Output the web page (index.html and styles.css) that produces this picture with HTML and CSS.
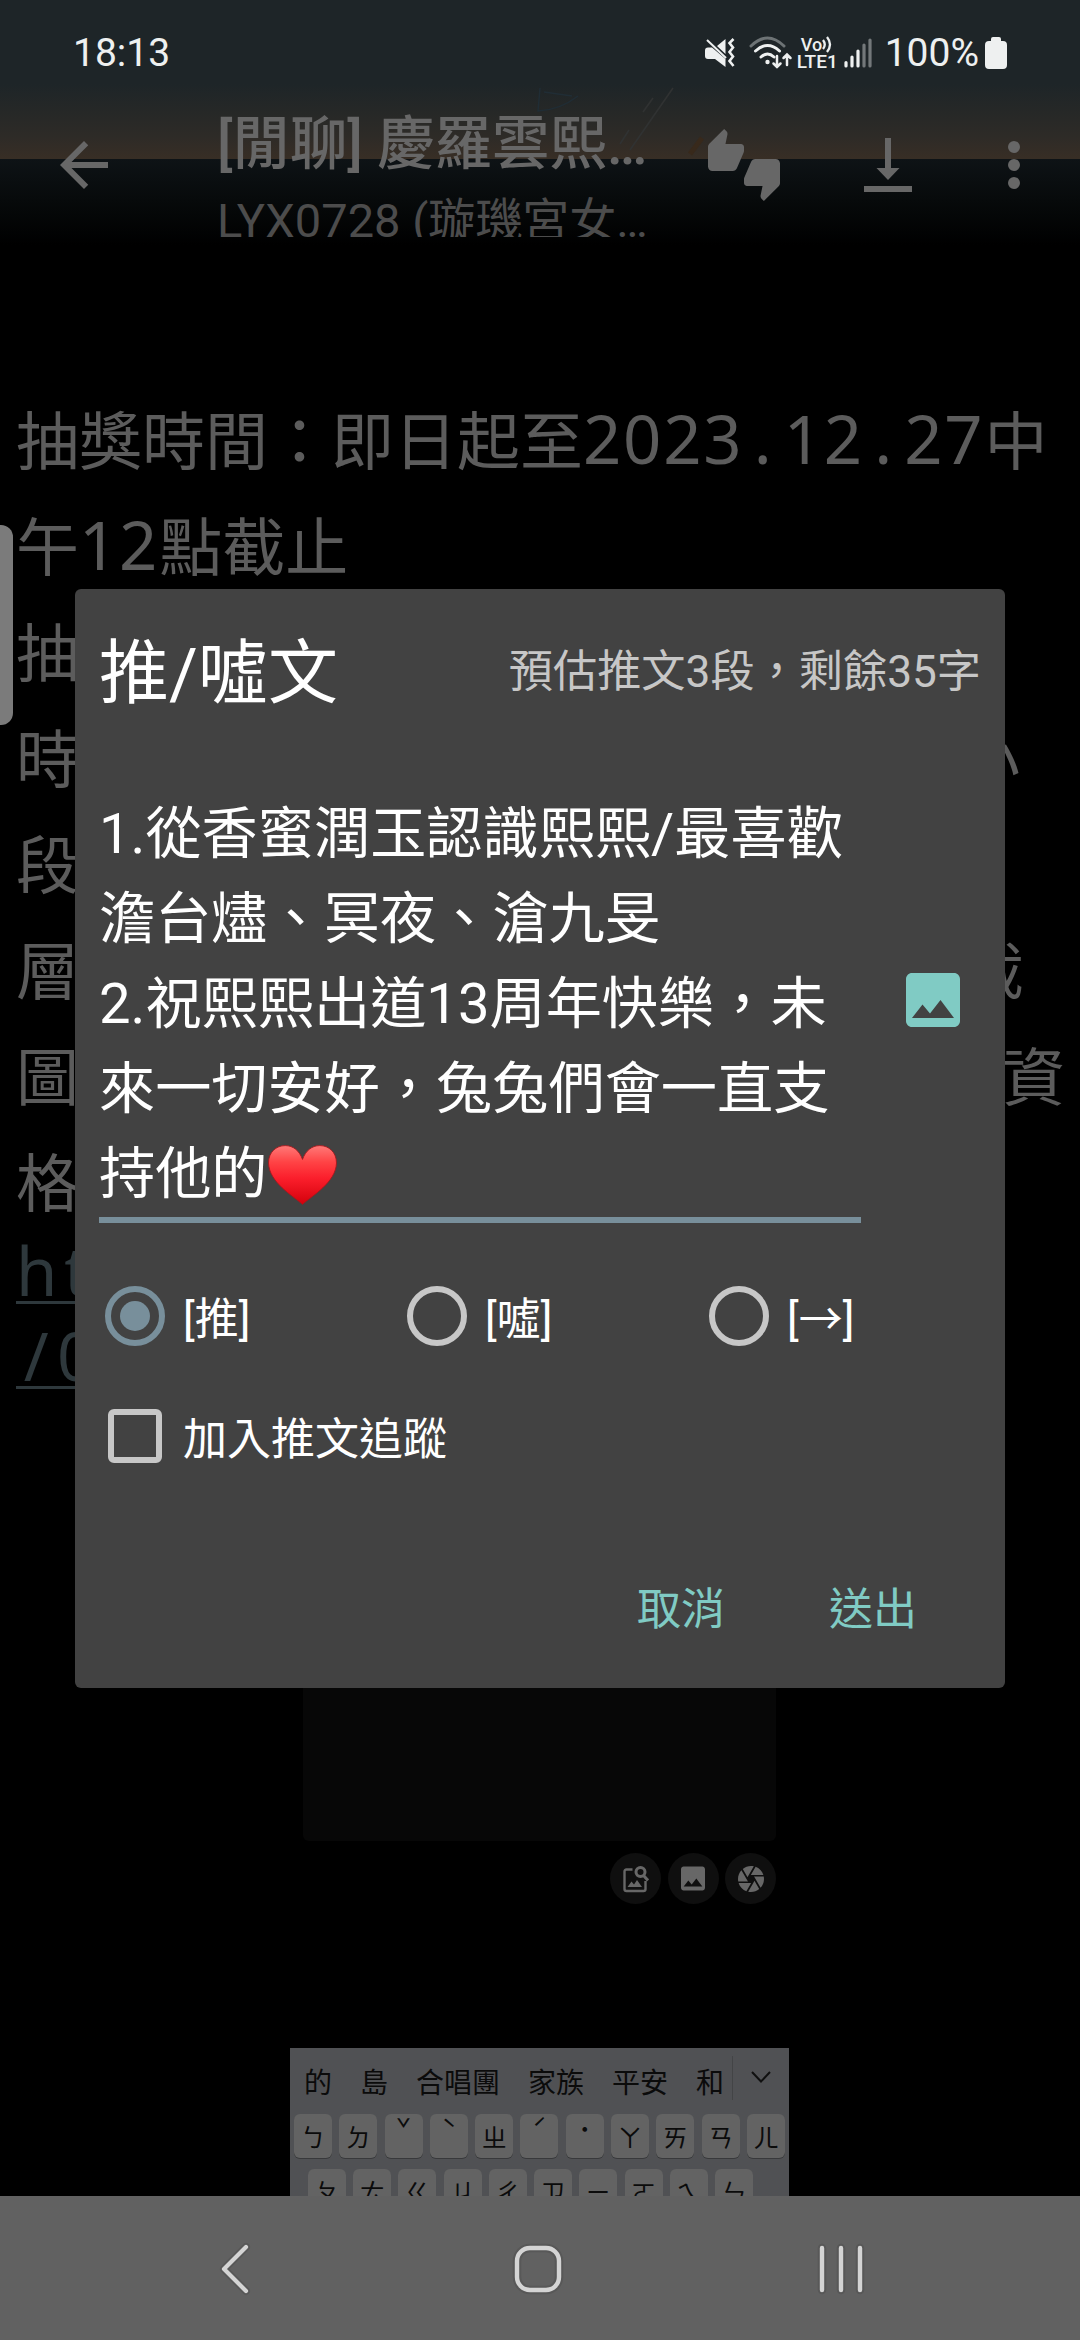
FILE: index.html
```html
<!DOCTYPE html>
<html lang="zh-Hant">
<head>
<meta charset="utf-8">
<title>推/噓文</title>
<link rel="stylesheet" href="styles.css">
</head>
<body>
<div class="screen">
  <header class="header">
    <svg class="streaks" viewBox="0 0 240 90" width="240" height="90" fill="none">
      <path d="M60 8L58 31Q80 30 98 16M64 12L92 16" stroke="#202d35" stroke-width="1.5"/>
      <path d="M193 8L150 70M173 18L163 32M149 50L140 64" stroke="#303232" stroke-width="1.6"/>
      <path d="M210 74L222 58" stroke="#38291b" stroke-width="5"/>
    </svg>
    <div class="status">
      <span class="clock">18:13</span>
      <div class="indicators">
        <svg class="mute" viewBox="0 0 30 30" width="30" height="30">
          <path fill="#eef0f0" d="M3 9.500H7L20.500 21V29L10 21H3Q0 21 0 18V12.500Q0 9.500 3 9.500ZM12 8L20.500 1V16Z"/>
          <path d="M2 2L21 20" stroke="#eef0f0" stroke-width="2"/>
          <path d="M28.500 1L24.500 5L28 9.500L24.500 14L28 18.500L24.500 23L28.500 28" fill="none" stroke="#eef0f0" stroke-width="2.600"/>
        </svg>
        <svg class="wifi" viewBox="0 0 44 34" width="44" height="34" fill="none" stroke-width="3" stroke-linecap="round">
          <path d="M2 10Q18.500 -6 35 10" stroke="#6d7375"/>
          <path d="M6.500 15Q18.500 4 30.500 15M12 21Q18.500 15 25 21" stroke="#eef0f0"/>
          <circle cx="18.500" cy="26" r="2.200" fill="#eef0f0"/>
          <path d="M28 20V31M24.500 27.500L28 31L31.500 27.500M38 29V19M34.500 22L38 18.500L41.500 22" stroke="#eef0f0" stroke-width="2.500"/>
        </svg>
        <span class="volte"><span class="vo">Vo<svg viewBox="0 0 10 17" width="10" height="17" fill="none" stroke="#eef0f0" stroke-width="2.300"><path d="M1 4Q4.500 8.500 1 13M5 1Q11 8.500 5 16"/></svg></span><span>LTE1</span></span>
        <svg class="signal" viewBox="0 0 28 30" width="28" height="30" stroke="#eef0f0" stroke-width="3.200" stroke-linecap="round">
          <path d="M2 24.500V28M8 19V28M14 13V28"/><path d="M20 7V28M26 2V28" stroke="#73787a"/>
        </svg>
        <span class="percent">100%</span>
        <svg viewBox="0 0 22 32" width="22" height="32" fill="#eef0f0"><path d="M6 4V2Q6 0 8 0H14Q16 0 16 2V4H18Q22 4 22 8V28Q22 32 18 32H4Q0 32 0 28V8Q0 4 4 4Z"/></svg>
      </div>
    </div>
    <div class="toolbar">
      <svg class="back" viewBox="0 0 24 24" width="72" height="72" fill="#676767"><path d="M20 11H7.830l5.590-5.590L12 4l-8 8 8 8 1.410-1.410L7.830 13H20v-2z"/></svg>
      <div class="heading">
        <div class="title">[閒聊] 慶羅雲熙…</div>
        <div class="subtitle">LYX0728 (璇璣宮女…</div>
      </div>
      <svg class="votes" viewBox="0 0 24 24" width="72" height="72" fill="#676767"><path d="M12 6c0-.55-.45-1-1-1H5.820l.66-3.180.02-.23c0-.31-.13-.59-.33-.8L5.380 0 .44 4.940C.17 5.210 0 5.590 0 6v6.500c0 .83.67 1.500 1.500 1.500h6.750c.62 0 1.150-.38 1.380-.91l2.260-5.290c.07-.17.11-.36.11-.55V6zm10.500 4h-6.750c-.62 0-1.150.38-1.380.91l-2.260 5.290c-.07.17-.11.36-.11.55V18c0 .55.45 1 1 1h5.180l-.66 3.180-.02.24c0 .31.13.59.33.8l.79.78 4.940-4.940c.27-.27.44-.65.44-1.060v-6.500c0-.83-.67-1.500-1.500-1.500z"/></svg>
      <svg class="download" viewBox="0 0 48 54" width="48" height="54" fill="#676767"><path d="M21 0H27V30H35.500L24 42L12.500 30H21ZM0 48H48V54H0Z"/></svg>
      <svg class="more" viewBox="0 0 12 48" width="12" height="48" fill="#676767"><circle cx="6" cy="6" r="6"/><circle cx="6" cy="24" r="6"/><circle cx="6" cy="42" r="6"/></svg>
    </div>
  </header>

  <main class="article">
    <p class="line">抽獎時間：即日起至<span class="n">2023</span><span class="n dot">.</span><span class="n">12</span><span class="n dot">.</span><span class="n">27</span>中</p>
    <p class="line">午<span class="n">12</span>點截止</p>
    <p class="line">抽</p>
    <p class="line split"><span>時</span><span class="end-a">小</span></p>
    <p class="line">段</p>
    <p class="line split"><span>層</span><span class="end-b">截</span></p>
    <p class="line split"><span>圖</span><span class="end-c">資</span></p>
    <p class="line">格</p>
    <p class="link"><span>h</span><span>t</span></p>
    <p class="link next"><span>/</span><span>0</span></p>
  </main>

  <section class="preview">
    <div class="card"></div>
    <div class="tools">
      <span class="tool"><svg viewBox="0 0 26 28" width="26" height="28" fill="none" stroke="#676767" stroke-width="2.400"><path d="M9.500 4.500H3.500Q1.500 4.500 1.500 6.500V24Q1.500 26 3.500 26H20.500Q22.500 26 22.500 24V16"/><circle cx="17.500" cy="7" r="4.500" stroke-width="3"/><path d="M20.500 10.500L25 15.500" stroke-width="3"/><path d="M4.500 22L8.500 16.500L11 19.500L14 15L19 22Z" fill="#676767" stroke="none"/></svg></span>
      <span class="tool"><svg viewBox="3 3 18 18" width="24" height="25" fill="#676767"><path d="M21 19V5c0-1.100-.9-2-2-2H5c-1.100 0-2 .9-2 2v14c0 1.100.9 2 2 2h14c1.100 0 2-.9 2-2zM8.500 13.500l2.500 3.010L14.500 12l4.500 6H5l3.500-4.500z"/></svg></span>
      <span class="tool"><svg viewBox="2 2 20 20" width="26" height="26" fill="#676767"><path d="M9.400 10.500l4.770-8.260C13.470 2.090 12.750 2 12 2c-2.400 0-4.600.85-6.320 2.250l3.660 6.350.06-.1zM21.540 9c-.92-2.920-3.150-5.260-6-6.340L11.880 9h9.660zm.26 1h-7.490l.29.5 4.760 8.250C21 16.970 22 14.610 22 12c0-.69-.07-1.350-.2-2zM8.540 12l-3.900-6.750C3.010 7.030 2 9.390 2 12c0 .69.07 1.350.2 2h7.490l-1.150-2zm-6.080 3c.92 2.920 3.150 5.260 6 6.340L12.120 15H2.460zm11.270 0l-3.900 6.760c.7.15 1.420.24 2.170.24 2.400 0 4.600-.85 6.320-2.250l-3.660-6.350-.93 1.600z"/></svg></span>
    </div>
  </section>

  <section class="keyboard">
    <div class="candidates">
      <span>的</span><span>島</span><span>合唱團</span><span>家族</span><span>平安</span><span>和</span>
      <i class="rule"></i>
      <svg viewBox="0 0 20 12" width="20" height="12" fill="none" stroke="#101010" stroke-width="2"><path d="M1 1L10 10.500L19 1"/></svg>
    </div>
    <div class="keys"><b>ㄅ</b><b>ㄉ</b><b class="tone">ˇ</b><b class="tone">ˋ</b><b>ㄓ</b><b class="tone">ˊ</b><b class="tone">˙</b><b>ㄚ</b><b>ㄞ</b><b>ㄢ</b><b>ㄦ</b></div>
    <div class="keys second"><b>ㄆ</b><b>ㄊ</b><b>ㄍ</b><b>ㄐ</b><b>ㄔ</b><b>ㄗ</b><b>ㄧ</b><b>ㄛ</b><b>ㄟ</b><b>ㄣ</b></div>
  </section>

  <nav class="nav">
    <svg class="nav-back" viewBox="0 0 34 54" width="34" height="54" fill="none" stroke-linecap="round" stroke-linejoin="round"><path d="M28 5L6 27L28 49" stroke="#585858" stroke-width="8"/><path d="M28 5L6 27L28 49" stroke="#d4d4d4" stroke-width="4.200"/></svg>
    <svg class="nav-home" viewBox="0 0 52 52" width="52" height="52" fill="none"><rect x="5" y="5" width="42" height="42" rx="13" stroke="#585858" stroke-width="8.500"/><rect x="5" y="5" width="42" height="42" rx="13" stroke="#d4d4d4" stroke-width="4.400"/></svg>
    <svg class="nav-recents" viewBox="0 0 50 54" width="50" height="54" stroke-linecap="round"><path d="M6 6V48M25 6V48M44 6V48" stroke="#585858" stroke-width="8.500"/><path d="M6 6V48M25 6V48M44 6V48" stroke="#d4d4d4" stroke-width="4.400"/></svg>
  </nav>

  <div class="edge-handle"></div>

  <div class="dialog">
    <div class="dialog-head">
      <h1>推/噓文</h1>
      <span class="count">預估推文3段，剩餘35字</span>
    </div>
    <div class="compose">
      <div class="input">
        <div>1.從香蜜潤玉認識熙熙/最喜歡</div>
        <div>澹台燼、冥夜、滄九旻</div>
        <div>2.祝熙熙出道13周年快樂，未</div>
        <div>來一切安好，兔兔們會一直支</div>
        <div class="last">持他的<svg class="heart" viewBox="0 0 68 50" width="69" height="60" preserveAspectRatio="none"><defs><linearGradient id="heart-fill" x1="0" y1="0" x2="0" y2="1"><stop offset="0" stop-color="#ff7a78"/><stop offset=".28" stop-color="#ff4345"/><stop offset=".55" stop-color="#fb1f2c"/><stop offset="1" stop-color="#d4000b"/></linearGradient></defs><path d="M34 49.500C24 42 1 31 .5 15C.5 6 8 .5 17 .5C25 .5 31 5 34 12C37 5 43 .5 51 .5C60 .5 67.500 6 67.500 15C67 31 44 42 34 49.500Z" fill="url(#heart-fill)" stroke="#a3181c" stroke-width=".8"/></svg></div>
      </div>
      <svg class="attach" viewBox="3 3 18 18" width="54" height="54" fill="#80cbc4"><path d="M21 19V5c0-1.100-.9-2-2-2H5c-1.100 0-2 .9-2 2v14c0 1.100.9 2 2 2h14c1.100 0 2-.9 2-2zM8.500 13.500l2.500 3.010L14.500 12l4.500 6H5l3.500-4.500z"/></svg>
    </div>
    <div class="choices">
      <div class="choice"><i class="radio on"></i><span>[推]</span></div>
      <div class="choice"><i class="radio"></i><span>[噓]</span></div>
      <div class="choice"><i class="radio"></i><span>[<em>→</em>]</span></div>
    </div>
    <div class="track"><i class="box"></i><span>加入推文追蹤</span></div>
    <div class="actions"><span>取消</span><span>送出</span></div>
  </div>
</div>
</body>
</html>
```

FILE: styles.css
```css
* { box-sizing: border-box; margin: 0; padding: 0; }

body { background: #000; }

.screen {
  position: relative;
  display: flex;
  flex-direction: column;
  width: 1080px;
  height: 2340px;
  overflow: hidden;
  background: #000;
  font-family: Roboto, "Noto Sans CJK TC", sans-serif;
  white-space: nowrap;
}

svg { display: block; flex: none; }

/* Header */
.header {
  position: relative;
  height: 384px;
  background:
    linear-gradient(#1e2528 0, #1e2528 84px, #262827 112px, #2e2b27 138px, #382e25 159px, transparent 159px),
    linear-gradient(#0e1316 159px, #070a0b 200px, #000 245px);
}
.streaks { position: absolute; left: 480px; top: 80px; }

.status {
  position: relative;
  display: flex;
  justify-content: space-between;
  height: 106px;
  padding: 0 73px;
  color: #eef0f0;
  font-size: 39px;
  line-height: 106px;
}
.indicators { display: flex; align-items: center; }
.wifi { margin-left: 14px; }
.volte {
  display: flex;
  flex-direction: column;
  margin-left: 4px;
  width: 40px;
  font-size: 19px;
  font-weight: 500;
  line-height: 17px;
}
.vo { display: flex; padding-left: 4px; font-size: 18px; }
.signal { margin-left: 7px; }
.percent { margin: 0 6px 0 13px; }

.toolbar {
  position: relative;
  display: flex;
  height: 140px;
  padding-left: 48px;
}
.back { margin-top: 23px; }
.heading { width: 440px; height: 131px; margin-left: 97px; padding-top: 4px; overflow: hidden; color: #676767; }
.title { font-size: 57.400px; font-weight: 500; line-height: 70px; }
.subtitle { font-size: 47px; line-height: 81px; color: #4c4c4c; }
.votes { margin: 23px 0 0 51px; }
.download { margin: 32px 0 0 84px; }
.more { margin: 35px 0 0 96px; }

/* Article text */
.article { height: 1304px; padding-left: 16px; color: #5c5c5c; font-family: "Noto Sans CJK TC", sans-serif; }
.line { height: 106px; font-size: 63px; line-height: 106px; }
.n { font-family: "Noto Sans"; font-size: 67px; line-height: 1; letter-spacing: 1.800px; }
.dot { display: inline-block; width: 40.200px; text-align: center; }
.split { display: flex; justify-content: space-between; }
.end-a { margin-right: 60px; }
.end-b { margin-right: 56px; }
.end-c { margin-right: 15px; }
.link {
  display: flex;
  width: 100px;
  height: 72px;
  border-bottom: 3px solid #2e383c;
  color: #2e383c;
  font-family: "Noto Sans";
  font-size: 67px;
  line-height: 76px;
}
.link span { width: 40.200px; text-align: center; }
.next { height: 85px; padding-top: 13px; }

/* Preview card with image tools */
.preview { width: 473px; height: 360px; margin-left: 303px; }
.card { height: 153px; border-radius: 0 0 6px 6px; background: #070707; }
.tools { display: flex; justify-content: flex-end; gap: 6.500px; margin-top: 12px; }
.tool {
  display: flex;
  align-items: center;
  justify-content: center;
  width: 51px;
  height: 51px;
  border-radius: 50%;
  background: #0f0f0f;
}

/* Keyboard picture */
.keyboard {
  width: 499px;
  height: 148px;
  margin-left: 290px;
  padding: 0 4px;
  overflow: hidden;
  background: #505154;
  color: #0b0b0b;
  font-family: "Noto Sans CJK TC", sans-serif;
}
.candidates { display: flex; align-items: center; gap: 28px; height: 66px; padding-left: 10px; font-size: 28px; line-height: 40px; }
.candidates svg { margin: -9px 0 0 -10px; }
.rule { width: 1px; height: 44px; margin: -6px 0 0 -20px; background: #434446; }
.keys { display: flex; justify-content: space-between; height: 44px; }
.keys b {
  width: 38px;
  height: 44px;
  border-radius: 6px;
  background: #636363;
  box-shadow: 0 1px 0 #38393b;
  font-size: 25px;
  font-weight: 400;
  line-height: 44px;
  text-align: center;
}
.keys .tone { line-height: 28px; }
.second { margin-top: 11px; padding: 0 32px 0 14px; }

/* System navigation */
.nav { display: flex; height: 144px; background: #616161; }
.nav-back { margin: 46px 0 0 218px; }
.nav-home { margin: 47px 0 0 260px; }
.nav-recents { margin: 46px 0 0 252px; }

.edge-handle {
  position: absolute;
  left: 0;
  top: 525px;
  width: 13px;
  height: 200px;
  border-radius: 0 12px 12px 0;
  background: #7b7b7b;
}

/* Dialog over the page */
.dialog {
  position: absolute;
  left: 75px;
  top: 589px;
  width: 930px;
  height: 1099px;
  padding: 0 24px;
  border-radius: 6px;
  background: #424242;
  color: #fff;
}
.dialog-head { display: flex; align-items: center; justify-content: space-between; height: 165px; padding-bottom: 8px; }
h1 { font-size: 70px; font-weight: 400; }
.count { color: #c7c7c7; font-size: 44.200px; }
.compose { display: flex; height: 469px; }
.input {
  width: 762px;
  border-bottom: 6px solid #788f9b;
  padding: 38px 0 0 0;
  font-size: 56.200px;
  line-height: 85px;
}
.input div { height: 85px; }
.last { display: flex; }
.heart { margin-top: 13px; }
.attach { margin: 219px 0 0 45px; }

.choices { display: flex; margin-top: 63px; padding-left: 6px; font-size: 44px; }
.choice { display: flex; flex: none; width: 302px; height: 60px; line-height: 68px; }
.choice:last-child { width: auto; }
.choice span { margin-left: 18px; }
.choice em { font-family: "Noto Sans CJK TC", sans-serif; font-style: normal; line-height: 1; }
.radio {
  width: 60px;
  height: 60px;
  padding: 9px;
  border: 6px solid #c7c7c7;
  border-radius: 50%;
}
.radio.on { border-color: #788f9b; background: #788f9b content-box; }
.track { display: flex; height: 54px; margin-top: 63px; padding-left: 9px; font-size: 44px; line-height: 62px; }
.box { width: 54px; height: 54px; margin-right: 21px; border: 6px solid #c7c7c7; border-radius: 6px; }
.actions {
  display: flex;
  justify-content: flex-end;
  gap: 104px;
  margin-top: 112px;
  padding-right: 64px;
  color: #80cbc4;
  font-size: 44px;
  line-height: 70px;
}
```
